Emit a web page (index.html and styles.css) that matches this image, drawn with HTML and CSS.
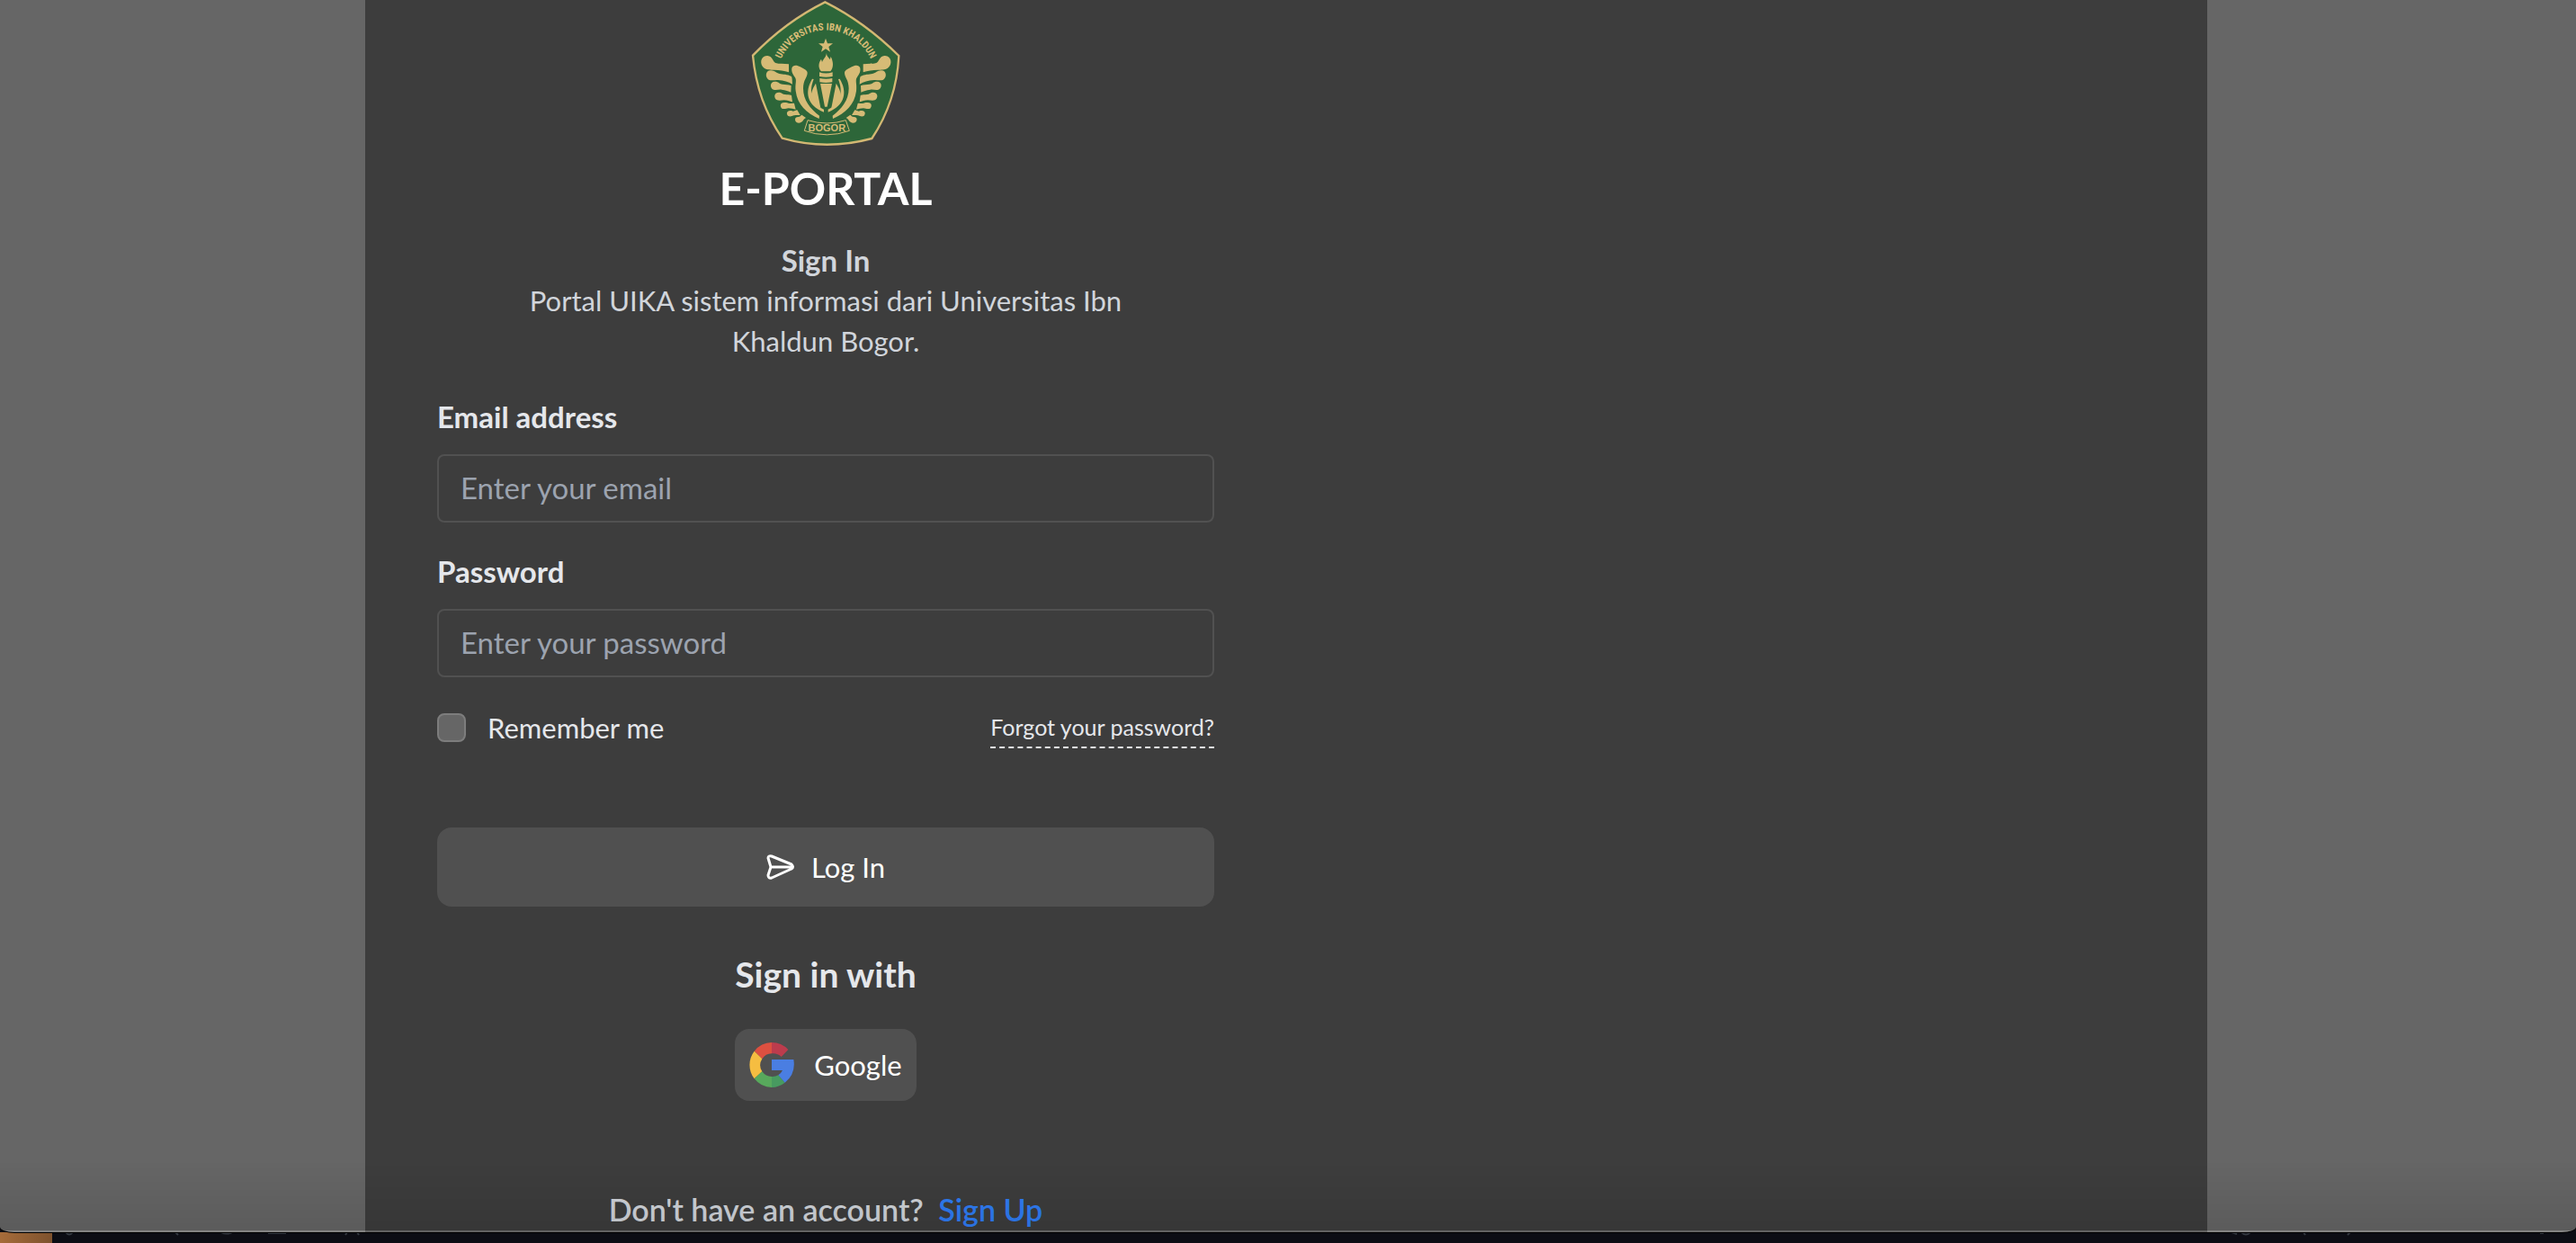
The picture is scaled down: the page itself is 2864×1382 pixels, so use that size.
FILE: index.html
```html
<!DOCTYPE html>
<html lang="id">
<head>
<meta charset="utf-8">
<title>E-PORTAL - Sign In</title>
<link rel="stylesheet" href="styles.css">
</head>
<body>
<div class="window">
  <main class="card">
    <section class="panel">
      <svg class="emblem" viewBox="105 4 498 486" role="img" aria-label="Universitas Ibn Khaldun Bogor">
        <defs>
          <path id="arc" d="M197 220A164 164 0 0 1 512 220"/>
          <g id="wing">
            <path d="M160 187c-24-2-28 30-11 41 10 7 22 5 32 6 20 1 34 2 50 8v-27c-18-3-32 0-44-4-10-4-9-22-27-24z"/>
            <path d="M171 236c-20 0-19 25-7 31 10 4 20 0 31 1 20 1 34 6 48 14-1-10 0-20-3-26-14-8-28-6-40-9-12-2-15-11-29-11z"/>
            <path d="M185 273c-19 0-17 22-5 27 9 2 18-1 27 0 14 2 22 4 31 9l1-22c-10-5-19-3-29-5-10-1-13-9-25-9z"/>
            <path d="M200 309c-20-1-20 20-8 26 8 3 15 0 23 0 12 1 20 4 28 6l-3-22c-8-3-14-1-22-3-8-1-10-6-18-7z"/>
            <path d="M217 343c-16-1-16 14-9 20 8 3 14 0 22-1 10 0 16 3 24 4l-5-20c-6-2-9 1-16 0-6-1-9-3-16-3z"/>
            <path d="M237 370c-14-1-15 12-8 18 7 3 13 0 20-2 7-2 13-1 20-1l-10-17c-6 0-8 4-13 4-4 0-4-2-9-2z"/>
            <path d="M262 391c-13 0-12 14-4 19 10 3 17-2 21-8 3-4 6-6 9-8l-14-10c-4 2-5 7-12 7z"/>
            <path d="M241 228c4-12 18-10 28-4 11 6 24 11 24 20 0 16-14 22-14 52 0 40 24 68 54 91l-1 10c-42-18-72-46-78-92-3-26 5-36-3-47-6-9-12-18-10-30z"/>
            <path d="M309 264c-26 43-18 88 39 111v-9c-46-22-49-62-34-101z"/>
            <path d="M321 279c-25 40-22 66 16 82z"/>
          </g>
        </defs>
        <path class="shield" d="M352 8Q485 75 598 187Q590 340 508 463Q355 504 209 462Q125 340 111 186Q220 73 352 8z"/>
        <text class="arc-text"><textPath href="#arc" startOffset="50%">UNIVERSITAS IBN KHALDUN</textPath></text>
        <g class="gold">
          <path d="M354 129l6 17h18l-14 11 5 17-15-10-15 10 5-17-14-11h18z"/>
          <path d="M357 177c0 14 7 13 11 23l3-10c10 19 9 37-1 49h-31c-12-14-8-30 0-41l3 10c5-13 13-15 15-31zM333 242q22 7 44 0v14q-22 5-44 0zM334 262q21 4 42 0v13q-21 4-42 0zM336 280h39l-16 77h-8z"/>
          <use href="#wing"/>
          <use href="#wing" transform="translate(710 0) scale(-1 1)"/>
        </g>
        <path class="ribbon" d="M294 402q64 20 127 0l12 35q-75 27-150 0z"/>
        <text class="town" x="358" y="439">BOGOR</text>
      </svg>

      <h1 class="title">E-PORTAL</h1>
      <div class="intro">
        <h2 class="subtitle">Sign In</h2>
        <p class="lead">Portal UIKA sistem informasi dari Universitas Ibn Khaldun Bogor.</p>
      </div>

      <form class="form">
        <div class="field">
          <label for="email">Email address</label>
          <input class="input" id="email" type="email" placeholder="Enter your email">
        </div>
        <div class="field">
          <label for="password">Password</label>
          <input class="input" id="password" type="password" placeholder="Enter your password">
        </div>
        <div class="options">
          <label class="remember"><input class="check" type="checkbox">Remember me</label>
          <a class="forgot" href="#">Forgot your password?</a>
        </div>
        <button class="button login" type="submit">
          <svg class="plane" viewBox="0 0 32 28" aria-hidden="true"><path d="M5 14H28M5 14L2 4Q2 1 6 2L28 11Q31 14 28 16L6 26Q2 27 2 23Z"/></svg>
          Log In
        </button>
      </form>

      <h2 class="with">Sign in with</h2>
      <button class="button google" type="button">
        <svg class="g-logo" viewBox="159 357 150 150" aria-hidden="true">
          <path fill="#dd5040" d="M176 386A75 75 0 0 1 234 357V394A38 38 0 0 0 202 412z"/>
          <path fill="#bd3c4d" d="M234 357A75 75 0 0 1 289 381L266 405A39 39 0 0 0 234 394z"/>
          <path fill="#f5bd41" d="M176 386A75 75 0 0 0 176 478L202 454A39 39 0 0 1 202 412z"/>
          <path fill="#58a95c" d="M176 478A75 75 0 0 0 234 507V471A39 39 0 0 1 202 454z"/>
          <path fill="#489a60" d="M234 507A75 75 0 0 0 278 491L256 466Q246 472 234 471z"/>
          <path fill="#4a7ee2" d="M234 414H307Q315 462 278 491L256 466Q266 459 270 450H234z"/>
        </svg>
        Google
      </button>
      <p class="signup">Don't have an account? <a href="#">Sign Up</a></p>
    </section>
    <section class="aside"></section>
  </main>
</div>
<div class="desktop">
  <svg class="scraps" viewBox="0 0 500 12" aria-hidden="true"><path d="M73 0q4 5 8 0M195 0l3 3M246 0q6 3 12 0M298 1h20M386 0l-2 3M397 0l2 3"/></svg>
  <svg class="scraps" viewBox="0 0 500 12" aria-hidden="true"><path d="M117 0l6 2M128 0q5 5 10 0M197 0l2 3M249 0l-3 3M460 1h4"/></svg>
</div>
</body>
</html>
```
FILE: styles.css
```css
* { box-sizing: border-box; }

body {
  margin: 0;
  height: 100vh;
  display: flex;
  flex-direction: column;
  background: #0c0d14;
  color: #e5e7eb;
  font: 33px/48px Lato, "Open Sans", sans-serif;
}

h1, h2, p { margin: 0; }
button, input { font: inherit; }

.window {
  position: relative;
  flex: 1;
  min-height: 0;
  overflow: hidden;
  background: #666;
  border-radius: 0 0 16px 16px / 0 0 6px 6px;
  box-shadow: 0 1px 0 #000;
}

/* Shade and light rim along the window's lower edge */
.window::after {
  content: "";
  position: absolute;
  inset: auto 0 0;
  height: 80px;
  border-bottom: 2px solid rgba(255, 255, 255, .2);
  background: linear-gradient(transparent, rgba(0, 0, 0, .1));
  pointer-events: none;
}

.card {
  display: grid;
  grid-template-columns: 1fr 1fr;
  width: 100%;
  max-width: 2048px;
  min-height: 100%;
  margin: 0 auto;
  background: #3d3d3d;
  position: relative;
  left: -2px;
}

.panel {
  display: flex;
  flex-direction: column;
  align-items: center;
  padding: 0 80px;
}

.emblem { width: 166px; height: 162px; margin-top: 1px; }
.shield { fill: #2d6639; stroke: #d3b873; stroke-width: 7; }
.gold { fill: #d6bb76; }
.ribbon { fill: none; stroke: #d6bb76; stroke-width: 3; }
.arc-text, .town {
  fill: #d6bb76;
  font-family: "Liberation Sans Narrow", "Roboto Condensed", "Liberation Sans", sans-serif;
  font-weight: 700;
  text-anchor: middle;
}
.arc-text { font-size: 33px; }
.town { font-family: "Liberation Sans", sans-serif; font-size: 33px; }

.title { margin-top: 16px; font-size: 50px; line-height: 60px; color: #fff; }

.intro { width: 700px; margin-top: 28px; text-align: center; color: #d1d5db; font-size: 31px; line-height: 45px; }
.subtitle { font-size: 33px; line-height: 45px; }

.form { width: 100%; margin-top: 37px; }
.field { margin-bottom: 30px; }
.field label { display: block; margin-bottom: 18px; font-weight: 700; }
.input {
  display: block;
  width: 100%;
  height: 76px;
  padding: 0 24px 2px;
  border: 2px solid #515151;
  border-radius: 8px;
  background: transparent;
  color: inherit;
}
.input::placeholder { color: #9ca3af; opacity: 1; }

.options { display: flex; justify-content: space-between; align-items: center; height: 52px; }
.remember { display: flex; align-items: center; gap: 24px; font-size: 31px; }
.check {
  appearance: none;
  width: 32px;
  height: 32px;
  margin: 0;
  border: 2px solid #7d7d7d;
  border-radius: 8px;
  background: #666;
}
.forgot {
  margin-top: 4px;
  padding-bottom: 4px;
  border-bottom: 2px dashed #e5e7eb;
  color: inherit;
  font-size: 25px;
  line-height: 36px;
  text-decoration: none;
}

.button {
  display: flex;
  align-items: center;
  justify-content: center;
  border: 0;
  border-radius: 16px;
  background: #505050;
  color: #fff;
  font-size: 31px;
}
.login { width: 100%; height: 88px; margin-top: 85px; padding-bottom: 2px; gap: 18px; }
.plane { width: 32px; height: 28px; fill: none; stroke: #fff; stroke-width: 3; stroke-linejoin: round; }

.with { margin-top: 50px; font-size: 39px; line-height: 50px; }
.google { height: 80px; margin-top: 36px; padding: 0 16px; gap: 22px; }
.g-logo { width: 50px; height: 50px; }

.signup { margin-top: 97px; color: #d1d5db; font-size: 34px; font-weight: 600; }
.signup a { margin-left: 8px; color: #2f7df6; text-decoration: none; }

.desktop {
  display: flex;
  justify-content: space-between;
  height: 12px;
  background: linear-gradient(90deg, #a66c3a, #7e522e 58px, transparent 58px);
}
.scraps { width: 500px; height: 12px; fill: none; stroke: #343941; stroke-width: 2; }
```
